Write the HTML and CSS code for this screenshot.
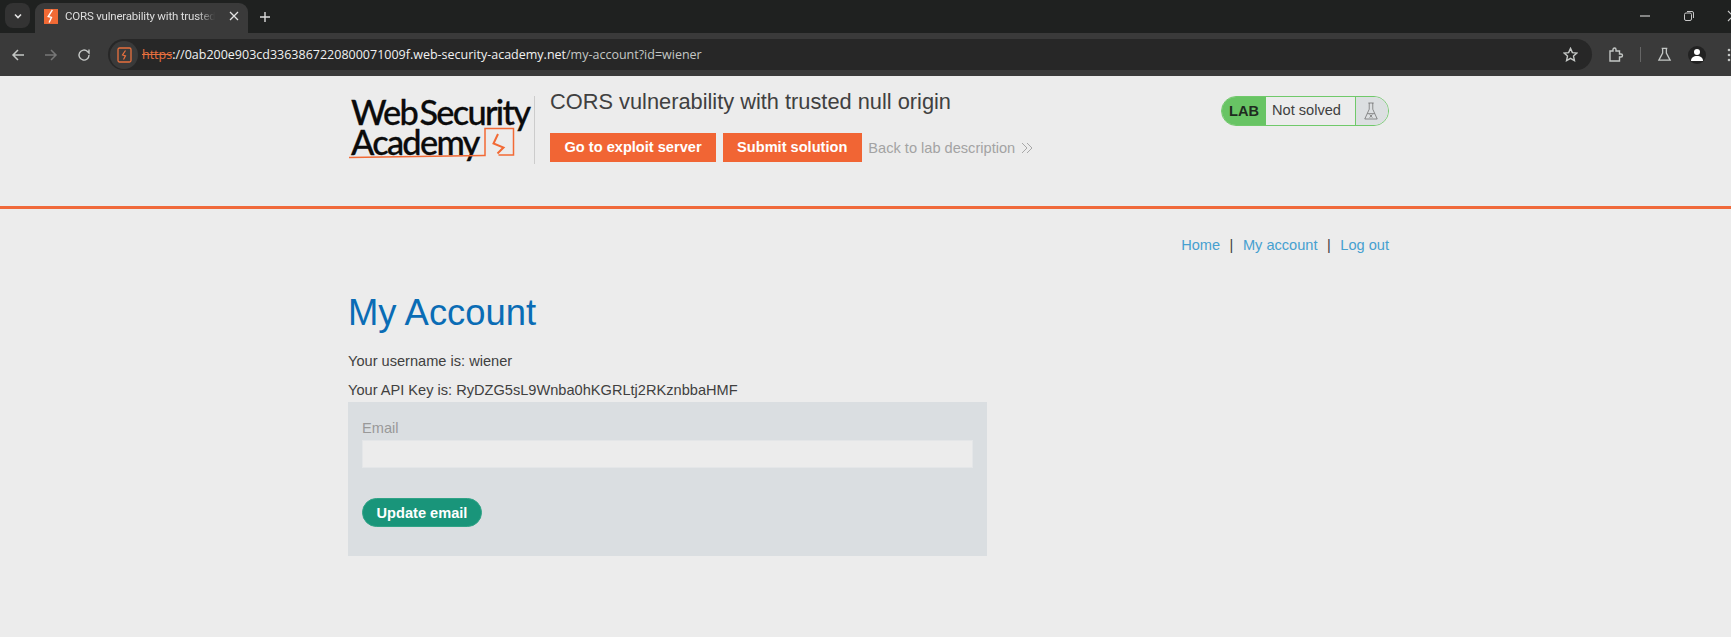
FILE: index.html
```html
<!DOCTYPE html>
<html lang="en">
    <head>
        <meta charset="utf-8">
        <title>CORS vulnerability with trusted null origin</title>
        <link rel="stylesheet" href="styles.css">
    </head>
    <body>
        <div class="tabstrip">
            <span class="tabmenu">
                <svg width="12" height="12" viewBox="0 0 12 12"><path d="M3 4.500l3 3 3-3" fill="none" stroke="#e3e3e3" stroke-width="1.600"/></svg>
            </span>
            <div class="tab">
                <svg class="favicon" width="14" height="15" viewBox="0 0 15 16"><rect width="15" height="16" fill="#f26a35"/><path d="M9 1L4.500 8l3.500 1-2.500 5.500" fill="none" stroke="#fff" stroke-width="1.500"/></svg>
                <span class="tabtitle">CORS vulnerability with trusted</span>
                <svg class="tabclose" width="12" height="12" viewBox="0 0 12 12"><path d="M2 2l8 8M10 2l-8 8" stroke="#e3e3e3" stroke-width="1.300"/></svg>
            </div>
            <svg class="newtab" width="12" height="12" viewBox="0 0 12 12"><path d="M6 1v10M1 6h10" stroke="#dcdcdc" stroke-width="1.400"/></svg>
            <div class="winctl">
                <svg width="12" height="12" viewBox="0 0 12 12"><path d="M1 6h10" stroke="#c8c8c8" stroke-width="1.200"/></svg>
                <svg width="12" height="12" viewBox="0 0 12 12"><rect x="1.500" y="3" width="7" height="7.500" rx="1.500" fill="none" stroke="#c8c8c8"/><path d="M4 1.500h5a1.500 1.500 0 0 1 1.500 1.500v5" fill="none" stroke="#c8c8c8"/></svg>
                <svg width="12" height="12" viewBox="0 0 12 12"><path d="M1 1l10 10M11 1L1 11" stroke="#c8c8c8" stroke-width="1.200"/></svg>
            </div>
        </div>
        <div class="toolbar">
            <svg width="14" height="14" viewBox="0 0 14 14"><path d="M13 7H2M7 2L2 7l5 5" fill="none" stroke="#c4c7c5" stroke-width="1.500"/></svg>
            <svg width="14" height="14" viewBox="0 0 14 14"><path d="M1 7h11M7 2l5 5-5 5" fill="none" stroke="#777" stroke-width="1.500"/></svg>
            <svg width="14" height="14" viewBox="0 0 14 14"><path d="M12 7a5 5 0 1 1-1.500-3.500L12 5V1.500" fill="none" stroke="#c4c7c5" stroke-width="1.400"/></svg>
            <div class="omnibox">
                <span class="siteicon">
                    <svg width="15" height="16" viewBox="0 0 15 16"><rect x="1" y="1" width="13" height="14" rx="1.500" fill="none" stroke="#e8703e" stroke-width="1.300"/><path d="M8.500 3.500L5.500 8l3 .8-2 3.700" fill="none" stroke="#e8703e" stroke-width="1.200"/></svg>
                </span>
                <span class="url"><s>https</s><span class="urlhost">://0ab200e903cd3363867220800071009f.web-security-academy.net</span>/my-account?id=wiener</span>
                <svg class="star" width="15" height="15" viewBox="0 0 16 16"><path d="M8 1.500l2 4.500 4.800.5-3.600 3.200 1 4.800L8 12.100l-4.200 2.400 1-4.800L1.200 6.500 6 6z" fill="none" stroke="#c4c7c5" stroke-width="1.500"/></svg>
            </div>
            <div class="tools">
                <svg width="16" height="16" viewBox="0 0 16 16"><path d="M2 4h3V2.500a1.500 1.500 0 0 1 3 0V4h3.500v3H13a1.500 1.500 0 0 1 0 3h-1.500v4H2z" fill="none" stroke="#c4c7c5" stroke-width="1.400"/></svg>
                <span class="toolsep"></span>
                <svg width="15" height="15" viewBox="0 0 16 16"><path d="M5 1.500h6M6 1.500v5L2 14h12l-4-7.500v-5" fill="none" stroke="#c4c7c5" stroke-width="1.400"/></svg>
                <span class="avatar">
                    <svg width="14" height="14" viewBox="0 0 14 14"><circle cx="7" cy="4" r="3" fill="#fff"/><path d="M1 13c0-3.500 2.500-5 6-5s6 1.500 6 5z" fill="#fff"/></svg>
                </span>
                <svg class="toolmenu" width="4" height="14" viewBox="0 0 4 14"><circle cx="2" cy="2" r="1.300" fill="#c4c7c5"/><circle cx="2" cy="7" r="1.300" fill="#c4c7c5"/><circle cx="2" cy="12" r="1.300" fill="#c4c7c5"/></svg>
            </div>
        </div>

        <header class="labheader">
            <div class="container headerrow">
                <div class="logo">
                    <span class="logotext">Web Security<br>Academy</span>
                    <svg class="logomark" width="170" height="36" viewBox="0 0 170 36"><path d="M1 32.500q60-1 135-2h1V3.500h28.500v26.500h-15" fill="none" stroke="#f26a35" stroke-width="1.500"/><path d="M150 9l-4.500 9.500 10 4-6 6" fill="none" stroke="#f26a35" stroke-width="2"/></svg>
                </div>
                <div class="labinfo">
                    <h2 class="labtitle">CORS vulnerability with trusted null origin</h2>
                    <div class="labactions">
                        <a class="btnorange">Go to exploit server</a>
                        <a class="btnorange">Submit solution</a>
                        <a class="backlink">Back to lab description
                            <svg width="12" height="12" viewBox="0 0 12 12"><path d="M1 1l5 5-5 5M6 1l5 5-5 5" fill="none" stroke="#a8a8a8"/></svg>
                        </a>
                    </div>
                </div>
                <div class="status">
                    <span class="statuslab">LAB</span>
                    <span class="statustext">Not solved</span>
                    <span class="statusicon">
                        <svg width="16" height="20" viewBox="0 0 18 22"><path d="M6 2h6M7 2v7L2 20h14L11 9V2M5 14h8M7.500 15l3 3.500M10.500 15l-3 3.500" fill="none" stroke="#666" stroke-width=".8"/></svg>
                    </span>
                </div>
            </div>
        </header>

        <div class="container">
            <nav class="topnav">
                <a>Home</a><span>|</span><a>My account</a><span>|</span><a>Log out</a>
            </nav>
            <h1 class="pagetitle">My Account</h1>
            <p class="line">Your username is: wiener</p>
            <p class="line apikey">Your API Key is: RyDZG5sL9Wnba0hKGRLtj2RKznbbaHMF</p>
            <form class="emailform">
                <label class="formlabel">Email</label>
                <input class="forminput" type="text">
                <button class="btngreen" type="button">Update email</button>
            </form>
        </div>
    </body>
</html>
```

FILE: styles.css
```css
*{margin:0;padding:0;box-sizing:border-box;}
html,body{height:100%;}
body{background:#ececec;overflow:hidden;font-family:"Liberation Sans",Arial,sans-serif;color:#404040;}
svg{display:block;flex:none;}

/* browser chrome */
.tabstrip{height:33px;background:#1f2120;display:flex;align-items:flex-end;padding-left:5px;position:relative;}
.tabmenu{width:25px;height:25px;margin:0 5px 5px 0;background:#333;border-radius:8px;display:flex;align-items:center;justify-content:center;}
.tab{width:213px;height:30px;background:#3a3a3a;border-radius:9px 9px 0 0;display:flex;align-items:center;padding:0 0 4px 9px;color:#dedede;font:11.500px Roboto,sans-serif;}
.tabtitle{width:150px;margin-left:7px;white-space:nowrap;letter-spacing:-.2px;-webkit-mask-image:linear-gradient(to right,#000 88%,transparent);}
.tabclose{margin-left:13px;}
.newtab{margin:0 0 10px 11px;}
.winctl{position:absolute;right:-8px;top:10px;display:flex;gap:32px;}
.toolbar{height:43px;background:#3a3a3a;display:flex;align-items:center;padding:0 0 0 11px;gap:19px;}
.omnibox{width:1485px;height:31px;margin-left:-2px;background:#272727;border-radius:16px;display:flex;align-items:center;padding:0 14.500px 0 2px;color:#c4c7c5;font:12.500px "Open Sans",sans-serif;}
.siteicon{width:28px;height:28px;border-radius:50%;background:#3a3a3a;display:flex;align-items:center;justify-content:center;margin-right:4px;}
.url{flex:1;white-space:nowrap;}
.url s{color:#e8703e;}
.urlhost{color:#f1f1f1;}
.tools{display:flex;align-items:center;gap:16px;margin-left:-3px;}
.toolsep{width:1px;height:15px;background:#666;}
.avatar{width:18px;height:18px;border-radius:50%;background:#222;display:flex;align-items:center;justify-content:center;}
.toolmenu{margin-left:5px;}

/* lab header */
.container{width:1041px;margin-left:348px;}
.labheader{height:133px;border-bottom:3px solid #f0693a;}
.headerrow{display:flex;padding-top:14px;}
.logo{width:187px;height:68px;margin-top:6px;border-right:1px solid #ccc;padding:1px 0 0 3px;position:relative;color:#0b0b0b;font:500 34.300px/30px Lato,sans-serif;letter-spacing:-1.700px;word-spacing:-4.500px;-webkit-text-stroke:.3px #0b0b0b;}
.logotext{display:block;white-space:nowrap;}
.logomark{position:absolute;left:0;top:29px;}
.labinfo{margin-left:15px;flex:1;}
.labtitle{font-size:21.800px;font-weight:400;line-height:24px;color:#404040;}
.labactions{display:flex;align-items:center;gap:6.500px;margin-top:19px;}
.btnorange{height:29px;padding:0 14.500px;background:#f16534;color:#fff;font-size:14.600px;font-weight:700;line-height:29px;}
.backlink{color:#a3a3a3;font-size:14.600px;display:flex;align-items:center;gap:6px;}
.status{width:168px;height:30px;margin-top:6px;border:1px solid #70c96a;border-radius:15px;display:flex;overflow:hidden;background:#ececec;font-size:14.600px;}
.statuslab{width:44px;background:#68c464;color:#1f2b1f;font-weight:700;text-align:center;line-height:28px;}
.statustext{flex:1;padding-left:6px;line-height:26px;}
.statusicon{width:33px;background:#dcdfe1;border-left:1px solid #70c96a;display:flex;align-items:center;justify-content:center;padding-right:3px;}

/* page */
.topnav{display:flex;justify-content:flex-end;gap:9.500px;margin-top:26px;font-size:14.600px;line-height:20px;color:#404040;}
.topnav a{color:#46a0d0;}
.pagetitle{margin-top:36px;font-size:36.400px;font-weight:400;line-height:44px;color:#0a6cb5;}
.line{margin-top:18px;font-size:14.600px;line-height:17px;}
.apikey{margin-top:12px;}
.emailform{width:639px;height:154px;margin-top:3px;background:#dadee1;padding:18px 14px 0;}
.formlabel{display:block;color:#999;font-size:14.600px;line-height:17px;}
.forminput{display:block;width:611px;height:28px;margin-top:3px;background:#ececec;border:1px solid #e4e6e8;}
.btngreen{display:block;width:120px;height:29px;margin-top:30px;border:1px solid #2fa386;border-radius:15px;background:#19957a;color:#fff;font:700 14.600px "Liberation Sans",Arial,sans-serif;}
```
